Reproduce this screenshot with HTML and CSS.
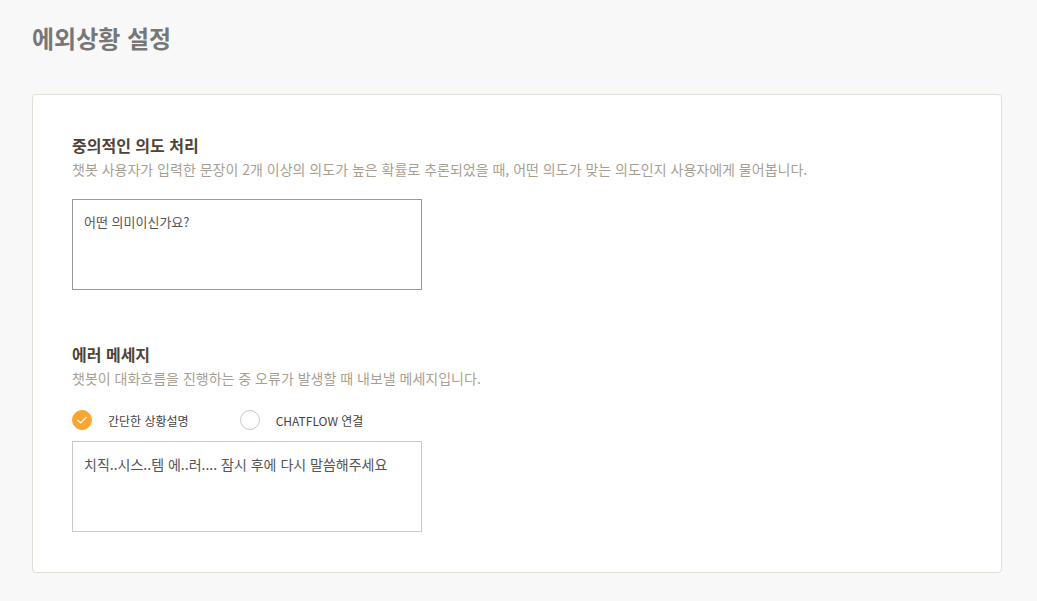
FILE: index.html
```html
<!DOCTYPE html>
<html lang="ko">
<head>
    <meta charset="UTF-8">
    <meta name="viewport" content="width=device-width, initial-scale=1.0">
    <title>예외상황 설정</title>
    <link rel="stylesheet" href="styles.css">
</head>
<body>
    <h1 class="page-title">에외상황 설정</h1>

    <div class="card">
        <div class="section">
            <h2 class="section-title">중의적인 의도 처리</h2>
            <p class="section-desc">챗봇 사용자가 입력한 문장이 2개 이상의 의도가 높은 확률로 추론되었을 때, 어떤 의도가 맞는 의도인지 사용자에게 물어봅니다.</p>
            <div class="text-box dark">어떤 의미이신가요?</div>
        </div>

        <div class="section">
            <h2 class="section-title">에러 메세지</h2>
            <p class="section-desc">챗봇이 대화흐름을 진행하는 중 오류가 발생할 때 내보낼 메세지입니다.</p>
            <div class="radio-row">
                <label class="radio checked">
                    <span class="radio-mark">
                        <svg width="12" height="10" viewBox="0 0 12 10"><path d="M1.5 5 L4.8 8 L10.5 2" fill="none" stroke="#fff" stroke-width="1.2"/></svg>
                    </span>
                    간단한 상황설명
                </label>
                <label class="radio">
                    <span class="radio-mark"></span>
                    CHATFLOW 연결
                </label>
            </div>
            <div class="text-box large">치직..시스..템 에..러.... 잠시 후에 다시 말씀해주세요</div>
        </div>
    </div>
</body>
</html>
```

FILE: styles.css
```css
body {
    margin: 0;
    background-color: #f8f8f8;
    font-family: "Noto Sans CJK KR", "Noto Sans", sans-serif;
    padding: 20px 35px 0 32px;
}
.page-title {
    margin: 0;
    font-size: 24px;
    line-height: 36px;
    font-weight: bold;
    color: #777;
}
.card {
    margin-top: 38px;
    background: #fff;
    border: 1px solid #e2dfd8;
    border-radius: 4px;
    padding: 38px 39px 40px;
    height: 479px;
    box-sizing: border-box;
}
.section + .section {
    margin-top: 52px;
}
.section-title {
    margin: 0;
    font-size: 16px;
    line-height: 24px;
    font-weight: bold;
    color: #4e4336;
}
.section-desc {
    margin: 0;
    font-size: 14px;
    line-height: 24px;
    color: #a89f94;
}
.text-box {
    margin-top: 18px;
    width: 350px;
    height: 91px;
    box-sizing: border-box;
    border: 1px solid #c9c9c9;
    padding: 11px 11px;
    font-size: 13px;
    line-height: 22px;
    color: #555;
}
.text-box.dark {
    border-color: #999;
}
.text-box.large {
    font-size: 14px;
}
.radio-row {
    display: flex;
    gap: 51px;
    margin-top: 19px;
}
.radio-row + .text-box {
    margin-top: 10px;
}
.radio {
    display: flex;
    align-items: center;
    gap: 16px;
    font-size: 12px;
    color: #444;
    height: 22px;
}
.radio-mark {
    width: 18px;
    height: 18px;
    border-radius: 50%;
    border: 1px solid #c8c8c8;
    display: flex;
    align-items: center;
    justify-content: center;
}
.radio.checked .radio-mark {
    background: #f9a532;
    border-color: #f9a532;
}
```
